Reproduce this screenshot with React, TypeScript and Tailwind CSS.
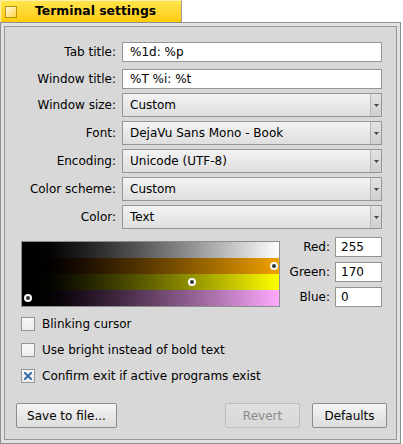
import React from 'react';

// Haiku-style "Terminal settings" window

const TextRow: React.FC<{ label: string; value: string }> = ({ label, value }) => (
  <div className="flex items-center h-[20px]">
    <div className="w-[111px] text-right">{label}</div>
    <div className="ml-[6px] w-[260px] h-[20px] bg-white border border-[#959595] flex items-center pl-[7px]">
      {value}
    </div>
  </div>
);

const MenuRow: React.FC<{ label: string; value: string }> = ({ label, value }) => (
  <div className="flex items-center h-[24px]">
    <div className="w-[111px] text-right">{label}</div>
    <div className="ml-[6px] w-[260px] h-[24px] flex border border-[#959595] bg-linear-to-b from-[#f3f3f3] to-[#dedede]">
      <span className="flex-1 flex items-center pl-[7px]">{value}</span>
      <span className="w-[11px] flex items-center justify-center border-l border-[#b4b4b4] bg-linear-to-b from-[#e2e2e2] to-[#cfcfcf]">
        <svg width="5" height="3" viewBox="0 0 5 3">
          <polygon points="0,0 5,0 2.5,3" fill="#444" />
        </svg>
      </span>
    </div>
  </div>
);

const Marker: React.FC<{ x: number; y: number }> = ({ x, y }) => (
  <div
    className="absolute w-[8px] h-[8px] rounded-full border-2 border-white bg-[#333]"
    style={{ left: x - 4, top: y - 4 }}
  />
);

const Check: React.FC<{ label: string; checked?: boolean }> = ({ label, checked }) => (
  <div className="flex items-center h-[14px]">
    <div className="w-[14px] h-[14px] border border-[#959595] bg-linear-to-b from-[#f8f8f8] to-[#ececec] flex items-center justify-center">
      {checked && (
        <svg width="8" height="8" viewBox="0 0 8 8">
          <path d="M1 1 L7 7 M7 1 L1 7" stroke="#3a6aa8" strokeWidth="2" strokeLinecap="square" />
        </svg>
      )}
    </div>
    <span className="ml-[7px]">{label}</span>
  </div>
);

const Button: React.FC<{ label: string; width: string; disabled?: boolean }> = ({ label, width, disabled }) => (
  <div
    className={
      width +
      ' h-[25px] flex items-center justify-center rounded-[2px] border bg-linear-to-b ' +
      (disabled
        ? 'border-[#bdbdbd] from-[#e0e0e0] to-[#d8d8d8] text-[#8a8a8a]'
        : 'border-[#8c8c8c] from-[#f5f5f5] to-[#dcdcdc] text-black')
    }
  >
    {label}
  </div>
);

const App: React.FC = () => {
  return (
    <div className="w-[403px] h-[444px] bg-white text-[12px] text-black font-['DejaVu_Sans',sans-serif] overflow-hidden">
      {/* title tab */}
      <div className="w-[182px] h-[22px] flex items-center bg-linear-to-b from-[#ffe44a] to-[#ffcb00] border-r border-[#9a9a9a] border-t border-l border-t-[#fff1a8] border-l-[#fff1a8]">
        <div className="ml-[4px] w-[12px] h-[12px] border border-[#b8960a] bg-linear-to-br from-[#fffbe2] to-[#ffd21a]" />
        <span className="ml-[18px] font-bold text-[12.4px]">Terminal settings</span>
      </div>

      {/* window frame */}
      <div className="w-[401px] h-[422px] border border-[#8e8e8e] bg-[#e2e2e2] p-[3px]">
        <div className="h-full border border-[#989898] bg-[#d8d8d8] flex flex-col pt-[15px]">
          <div className="flex flex-col gap-[7px]">
            <TextRow label="Tab title:" value="%1d: %p" />
            <TextRow label="Window title:" value="%T %i: %t" />
          </div>

          <div className="mt-[4px] flex flex-col gap-[4px]">
            <MenuRow label="Window size:" value="Custom" />
            <MenuRow label="Font:" value="DejaVu Sans Mono - Book" />
            <MenuRow label="Encoding:" value="Unicode (UTF-8)" />
            <MenuRow label="Color scheme:" value="Custom" />
            <MenuRow label="Color:" value="Text" />
          </div>

          {/* color control */}
          <div className="mt-[8px] flex pl-[16px] pr-[14px]">
            <div className="relative mt-[4px] w-[259px] h-[66px] border border-[#8e8e8e] flex flex-col">
              <div className="h-[16px] bg-linear-to-r from-black to-white" />
              <div className="h-[16px] bg-linear-to-r from-black to-[#f2a200]" />
              <div className="h-[16px] bg-linear-to-r from-black to-[#ffff00]" />
              <div className="h-[16px] bg-linear-to-r from-black to-[#ffaaff]" />
              <Marker x={252} y={24} />
              <Marker x={170} y={40} />
              <Marker x={6} y={56} />
            </div>
            <div className="flex-1 flex flex-col gap-[5px]">
              {[
                ['Red:', '255'],
                ['Green:', '170'],
                ['Blue:', '0'],
              ].map(([l, v]) => (
                <div key={l} className="flex items-center h-[20px]">
                  <span className="flex-1 text-right">{l}</span>
                  <div className="ml-[5px] w-[47px] h-[20px] bg-white border border-[#959595] flex items-center pl-[5px]">
                    {v}
                  </div>
                </div>
              ))}
            </div>
          </div>

          <div className="mt-[10px] pl-[16px] flex flex-col gap-[12px]">
            <Check label="Blinking cursor" />
            <Check label="Use bright instead of bold text" />
            <Check label="Confirm exit if active programs exist" checked />
          </div>

          <div className="mt-[20px] flex pl-[11px] pr-[9px]">
            <Button label="Save to file..." width="w-[101px]" />
            <div className="flex-1" />
            <Button label="Revert" width="w-[75px]" disabled />
            <div className="w-[12px]" />
            <Button label="Defaults" width="w-[75px]" />
          </div>
        </div>
      </div>
    </div>
  );
};

export default App;
